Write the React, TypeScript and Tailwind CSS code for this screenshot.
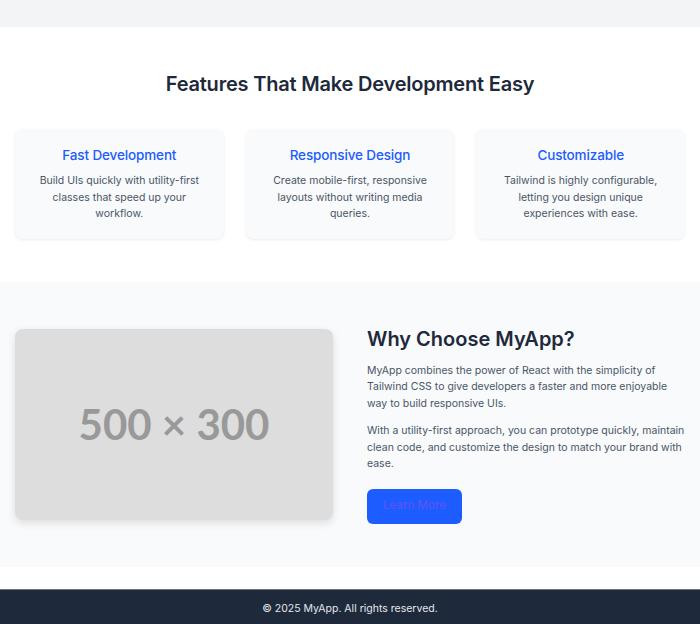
const features = [
  { title: 'Fast Development', desc: 'Build UIs quickly with utility-first classes that speed up your workflow.' },
  { title: 'Responsive Design', desc: 'Create mobile-first, responsive layouts without writing media queries.' },
  { title: 'Customizable', desc: 'Tailwind is highly configurable, letting you design unique experiences with ease.' },
];

export default function App() {
  return (
    <div className="min-h-[624px] bg-white font-['Inter','Liberation_Sans',sans-serif] text-gray-800">
      {/* Bande du haut */}
      <div className="h-[27px] bg-gray-100" />

      {/* Fonctionnalités */}
      <section className="px-[15px] pt-[43px] pb-[43px] bg-white">
        <h2 className="text-center text-[20px] leading-[28px] font-semibold tracking-[-0.01em] text-[#1e293b]">
          Features That Make Development Easy
        </h2>
        <div className="mt-[31px] grid grid-cols-3 gap-[22px]">
          {features.map(f => (
            <div key={f.title} className="bg-[#f8fafc] rounded-lg shadow-[0_1px_3px_rgba(0,0,0,0.08)] px-5 pt-4 pb-4 text-center">
              <h3 className="text-[13.5px] leading-[20px] font-medium tracking-[-0.01em] text-[#1d5cff]">{f.title}</h3>
              <p className="mt-2 text-[10.5px] leading-[16.5px] text-gray-600">{f.desc}</p>
            </div>
          ))}
        </div>
      </section>

      {/* Pourquoi */}
      <section className="bg-[#f8fafc] px-[15px] py-[43px]">
        <div className="grid grid-cols-2 gap-[34px] items-center">
          <div className="h-[191px] rounded-lg bg-[#dddddd] shadow-[0_3px_8px_rgba(0,0,0,0.12)] flex items-center justify-center">
            <span className="font-['Lato','Liberation_Sans',sans-serif] font-bold text-[42px] text-[#999999]">500 × 300</span>
          </div>
          <div>
            <h2 className="text-[20px] leading-[28px] font-semibold text-[#1e293b]">Why Choose MyApp?</h2>
            <p className="mt-[10px] text-[10.5px] leading-[16.5px] text-gray-600">
              MyApp combines the power of React with the simplicity of Tailwind CSS to give developers a faster and more enjoyable way to build responsive UIs.
            </p>
            <p className="mt-[11px] text-[10.5px] leading-[16.5px] text-gray-600">
              With a utility-first approach, you can prototype quickly, maintain clean code, and customize the design to match your brand with ease.
            </p>
            <button className="mt-4 h-[35px] px-4 rounded-md bg-[#1d5cff] text-[11.5px] font-medium text-[#5b55f5]">
              Learn More
            </button>
          </div>
        </div>
      </section>

      <div className="h-[22px] bg-white" />

      {/* Pied de page */}
      <footer className="bg-[#1e293b] border-t border-gray-500 pt-[11px] pb-[8px] text-center">
        <p className="text-[10.5px] leading-[16.5px] text-gray-200">© 2025 MyApp. All rights reserved.</p>
      </footer>
    </div>
  );
}
